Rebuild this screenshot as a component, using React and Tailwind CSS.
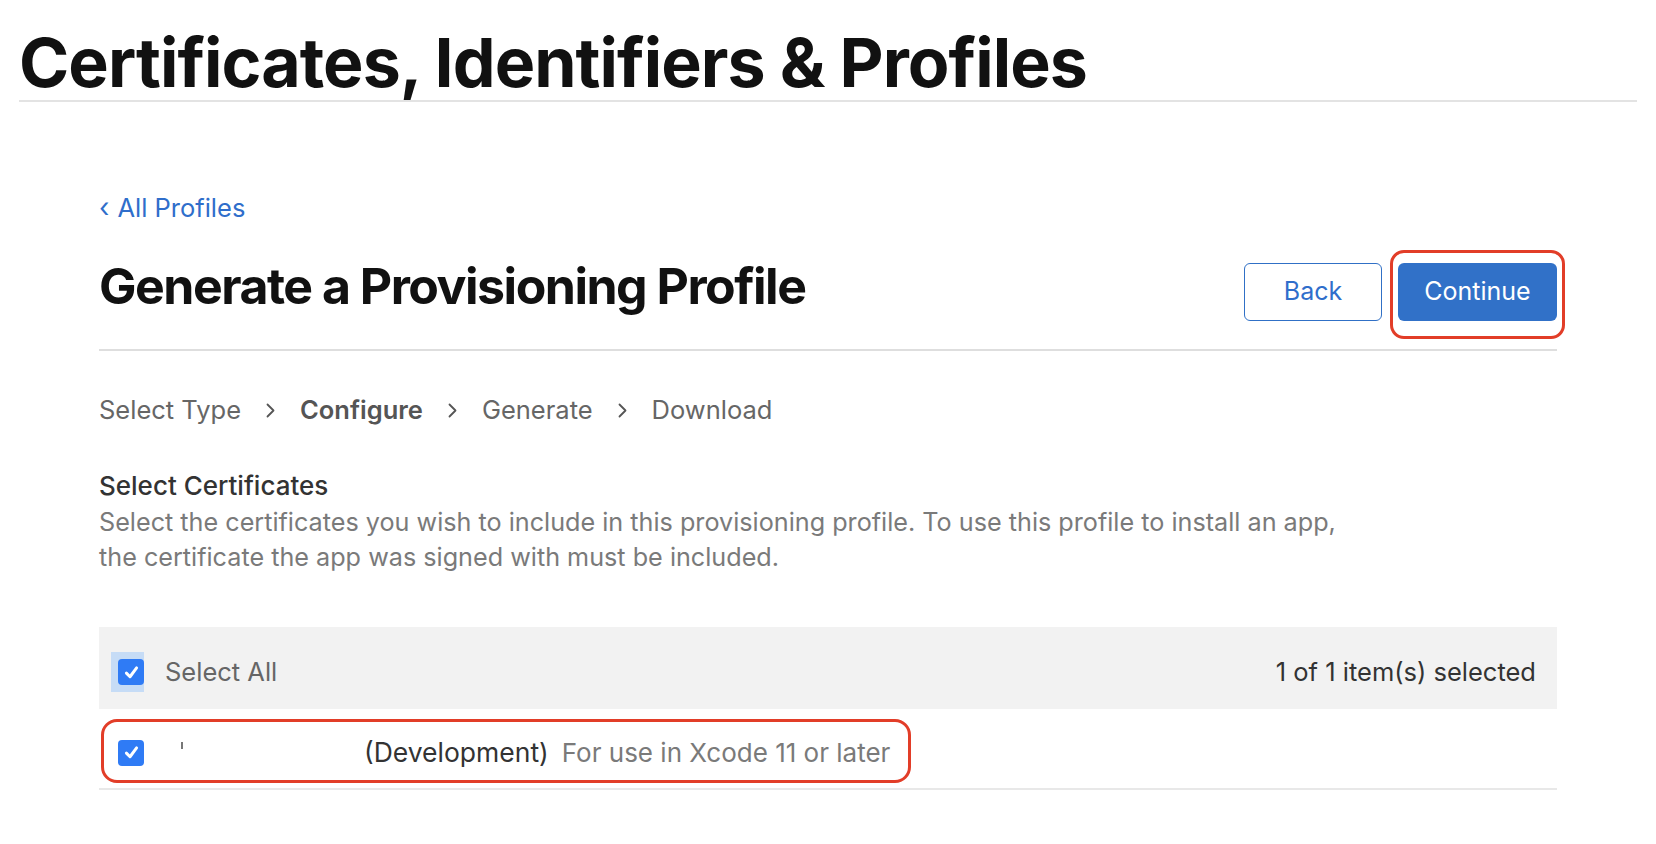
import React from "react";

const font = { fontFamily: "Inter, 'Noto Sans', sans-serif" };

function CheckBox() {
  return (
    <span className="flex h-[26px] w-[26px] items-center justify-center rounded-[4px] bg-[#2f7bf5]">
      <svg width="17" height="17" viewBox="0 0 16 16" fill="none">
        <path d="M3.2 8.6 L6.6 12 L12.8 3.6" stroke="#fff" strokeWidth="2.8" strokeLinecap="round" strokeLinejoin="round" />
      </svg>
    </span>
  );
}

function Chevron() {
  return (
    <svg width="9" height="15" viewBox="0 0 9 15" fill="none">
      <path d="M1.5 1.5 L7.5 7.5 L1.5 13.5" stroke="#555" strokeWidth="1.8" strokeLinecap="round" strokeLinejoin="round" />
    </svg>
  );
}

export default function App() {
  const steps = [
    { label: "Select Type", active: false },
    { label: "Configure", active: true },
    { label: "Generate", active: false },
    { label: "Download", active: false },
  ];

  return (
    <div className="min-h-screen bg-white" style={font}>
      {/* top title */}
      <header className="px-[19px]">
        <h1 className="pt-[28px] text-[68px] font-bold leading-none tracking-[-0.014em] text-[#111]">
          Certificates, Identifiers &amp; Profiles
        </h1>
        <div className="mt-[4px] h-[2px] bg-[#e3e3e3]" />
      </header>

      <main className="mx-auto w-[1458px]">
        <a className="mt-[90px] flex items-center gap-[8px] text-[25.5px] leading-[32px] text-[#2f6ecb]">
          <span className="text-[27px]">‹</span>
          <span>All Profiles</span>
        </a>

        {/* heading + buttons */}
        <div className="mt-[35px] flex items-start justify-between border-b-2 border-[#dedede] pb-[28px]">
          <h2 className="mt-[2px] text-[50px] font-bold leading-none tracking-[-0.03em] text-[#111]">
            Generate a Provisioning Profile
          </h2>
          <div className="mt-[4px] flex gap-[16px]">
            <button className="h-[58px] w-[138px] rounded-[6px] border-[1.5px] border-[#3070c6] text-[25px] text-[#2f6ecb]">
              Back
            </button>
            <div className="relative">
              <button className="h-[58px] w-[159px] rounded-[6px] bg-[#3171c8] text-[25px] text-white">
                Continue
              </button>
              <div className="pointer-events-none absolute -left-[8px] -right-[8px] -top-[13px] -bottom-[18px] rounded-[14px] border-[3px] border-[#e23d28]" />
            </div>
          </div>
        </div>

        {/* steps */}
        <div className="mt-[43px] flex items-center gap-[25px] text-[25.5px] leading-[32px]">
          {steps.map((s, i) => (
            <React.Fragment key={s.label}>
              {i > 0 && <Chevron />}
              <span className={s.active ? "font-semibold text-[#555]" : "text-[#666]"}>{s.label}</span>
            </React.Fragment>
          ))}
        </div>

        {/* certificates */}
        <h3 className="mt-[44px] text-[26px] font-medium leading-[32px] text-[#333]">Select Certificates</h3>
        <p className="mt-[3px] text-[25.2px] leading-[35px] text-[#7a7a7a]">
          Select the certificates you wish to include in this provisioning profile. To use this profile to install an app,
          <br />
          the certificate the app was signed with must be included.
        </p>

        <div className="mt-[52px]">
          <div className="flex h-[82px] items-center justify-between bg-[#f2f2f2] pl-[12px] pr-[21px] pt-[8px]">
            <div className="flex items-center">
              <div className="flex items-center bg-[#c6dcf6] py-[7px] pl-[7px]">
                <CheckBox />
              </div>
              <span className="ml-[21px] text-[25.5px] text-[#666]">Select All</span>
            </div>
            <span className="text-[25.5px] text-[#333]">1 of 1 item(s) selected</span>
          </div>

          <div className="relative flex h-[81px] items-center border-b-2 border-[#e8e8e8] pl-[19px] pt-[8px]">
            <div className="w-[63px]">
              <CheckBox />
            </div>
            <div className="w-[183px] self-center pb-[14px]">
              <div className="h-[7px] w-[2px] bg-[#777]" />
            </div>
            <span className="text-[26.5px] text-[#333]">(Development)</span>
            <span className="ml-[13px] text-[26px] text-[#7a7a7a]">For use in Xcode 11 or later</span>
            <div className="pointer-events-none absolute left-[2px] top-[10px] h-[64px] w-[810px] rounded-[16px] border-[3px] border-[#e23d28]" />
          </div>
        </div>
      </main>
    </div>
  );
}
